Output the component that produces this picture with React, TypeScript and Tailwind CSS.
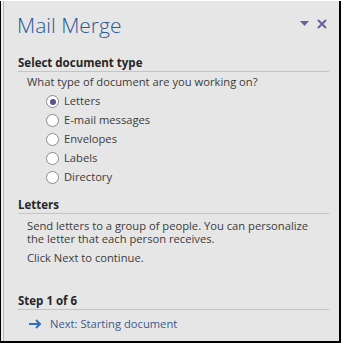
const options = ["Letters", "E-mail messages", "Envelopes", "Labels", "Directory"];

function Radio({ checked }: { checked: boolean }) {
  return (
    <span className="w-[13px] h-[13px] rounded-full border border-[#8a8a8a] bg-white flex items-center justify-center">
      {checked && <span className="w-[6px] h-[6px] rounded-full bg-[#5b4f8f]" />}
    </span>
  );
}

function SectionHeader({ children }: { children: string }) {
  return (
    <div className="border-b border-[#c4c4c4] pb-[1px] text-[11.5px] font-bold text-[#262626] leading-[14px]">
      {children}
    </div>
  );
}

export default function App() {
  return (
    <div className="w-[341px] h-[343px] bg-black">
      <div className="w-[338px] h-[340px] ml-[1px] mt-[1px] bg-[#f0f0f0] pl-[2px]">
        <div
          className="h-full bg-[#e6e6e6] border-l border-[#b8b8b8] flex flex-col pl-[14px] pr-[10px] text-[11.2px] text-[#3b3b3b]"
          style={{ fontFamily: '"Segoe UI", "Open Sans", "Noto Sans", sans-serif' }}
        >
          <div className="flex items-start justify-between h-[50px] pt-[10px]">
            <div className="text-[21px] font-light text-[#2b579a] leading-[28px] -ml-[1px]">Mail Merge</div>
            <div className="flex items-center gap-[8px] pt-[8px] pr-[2px]">
              <svg width="9" height="6" viewBox="0 0 9 6">
                <path d="M0 0 H9 L4.5 5 Z" fill="#6b5e9e" />
              </svg>
              <svg width="10" height="10" viewBox="0 0 10 10">
                <path d="M1 1 L9 9 M9 1 L1 9" stroke="#6b5e9e" strokeWidth="2" />
              </svg>
            </div>
          </div>
          <div className="mt-[5px]">
            <SectionHeader>Select document type</SectionHeader>
          </div>
          <div className="pl-[9px] pt-[1px] leading-[18px]">What type of document are you working on?</div>
          <div className="flex flex-col pl-[28px] pt-[1px]">
            {options.map((o, i) => (
              <label key={o} className="flex items-center gap-[5px] h-[19px]">
                <Radio checked={i === 0} />
                <span>{o}</span>
              </label>
            ))}
          </div>
          <div className="mt-[11px]">
            <SectionHeader>Letters</SectionHeader>
          </div>
          <div className="pl-[9px] pt-[5px] leading-[13px] max-w-[292px]">
            Send letters to a group of people. You can personalize the letter that each person receives.
          </div>
          <div className="pl-[9px] pt-[6px] leading-[13px]">Click Next to continue.</div>
          <div className="mt-[30px]">
            <SectionHeader>Step 1 of 6</SectionHeader>
          </div>
          <div className="flex items-center gap-[8px] pl-[11px] pt-[5px] leading-[18px]">
            <svg width="13" height="10" viewBox="0 0 13 10">
              <path d="M0 5 H11 M7 1 L11 5 L7 9" stroke="#2f6fbd" strokeWidth="2" fill="none" />
            </svg>
            <span className="text-[#3c5a8c]">Next: Starting document</span>
          </div>
        </div>
      </div>
    </div>
  );
}
